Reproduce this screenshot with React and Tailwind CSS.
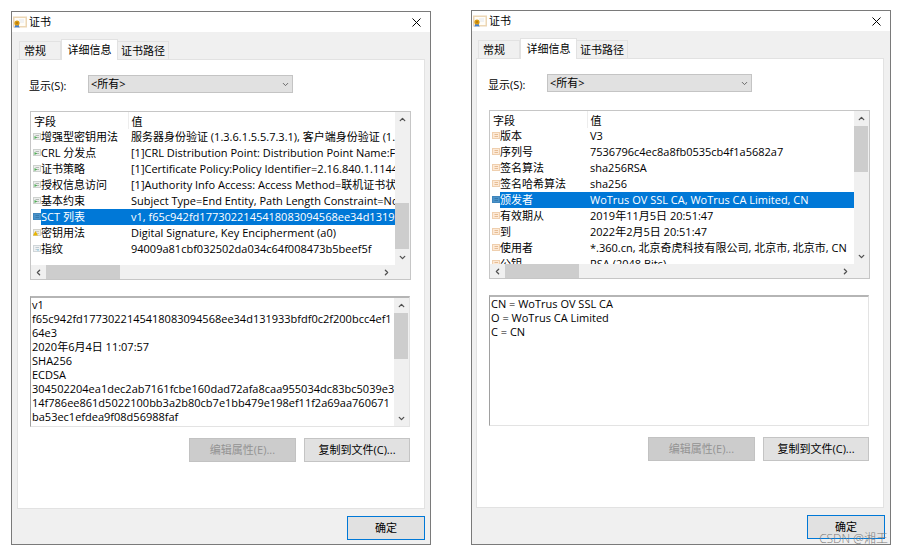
import { ChevronDown, ChevronLeft, ChevronRight, ChevronUp, X } from 'lucide-react';

const sctFields = [
  { name: '增强型密钥用法', value: '服务器身份验证 (1.3.6.1.5.5.7.3.1), 客户端身份验证 (1.3.6.1.5.5.7.3.2)', icon: 'ext' },
  { name: 'CRL 分发点', value: '[1]CRL Distribution Point: Distribution Point Name:Full Name', icon: 'ext' },
  { name: '证书策略', value: '[1]Certificate Policy:Policy Identifier=2.16.840.1.114412', icon: 'ext' },
  { name: '授权信息访问', value: '[1]Authority Info Access: Access Method=联机证书状态协议', icon: 'ext' },
  { name: '基本约束', value: 'Subject Type=End Entity, Path Length Constraint=None', icon: 'ext' },
  { name: 'SCT 列表', value: 'v1, f65c942fd1773022145418083094568ee34d131933bfdf0c', icon: 'selected', selected: true },
  { name: '密钥用法', value: 'Digital Signature, Key Encipherment (a0)', icon: 'warn' },
  { name: '指纹', value: '94009a81cbf032502da034c64f008473b5beef5f', icon: 'prop' },
];

const issuerFields = [
  { name: '版本', value: 'V3', icon: 'v1' },
  { name: '序列号', value: '7536796c4ec8a8fb0535cb4f1a5682a7', icon: 'v1' },
  { name: '签名算法', value: 'sha256RSA', icon: 'v1' },
  { name: '签名哈希算法', value: 'sha256', icon: 'v1' },
  { name: '颁发者', value: 'WoTrus OV SSL CA, WoTrus CA Limited, CN', icon: 'selected', selected: true },
  { name: '有效期从', value: '2019年11月5日 20:51:47', icon: 'v1' },
  { name: '到', value: '2022年2月5日 20:51:47', icon: 'v1' },
  { name: '使用者', value: '*.360.cn, 北京奇虎科技有限公司, 北京市, 北京市, CN', icon: 'v1' },
  { name: '公钥', value: 'RSA (2048 Bits)', icon: 'v1' },
];

const sctDetail = `v1
f65c942fd1773022145418083094568ee34d131933bfdf0c2f200bcc4ef1
64e3
2020年6月4日 11:07:57
SHA256
ECDSA
304502204ea1dec2ab7161fcbe160dad72afa8caa955034dc83bc5039e3
14f786ee861d5022100bb3a2b80cb7e1bb479e198ef11f2a69aa760671
ba53ec1efdea9f08d56988faf`;

const issuerDetail = `CN = WoTrus OV SSL CA
O = WoTrus CA Limited
C = CN`;

function CertificateIcon() {
  return (
    <svg width="14" height="13" viewBox="0 0 14 13" className="shrink-0">
      <rect x="0.75" y="1.25" width="12.5" height="9.5" fill="#fffdf8" stroke="#ecd6b4" strokeWidth="1.5" />
      <path d="M6 4h5M7 6h4" stroke="#e3e6ec" />
      <path d="M2.5 8 1.5 12l1.8-1 .7 1 .7-1 1.8 1-1-4z" fill="#3f7fd6" />
      <circle cx="4" cy="7" r="2.6" fill="#d99a12" />
      <circle cx="4" cy="7" r="1.1" fill="#b87a08" />
    </svg>
  );
}

const iconColors = {
  ext: { bg: '#eceeec', edge: '#cdd1ce', ink: '#b4bab6' },
  warn: { bg: '#ecece8', edge: '#d3d3cd', ink: '#c9c9c4' },
  prop: { bg: '#eef1f3', edge: '#d0d6d9', ink: '#c0cbd1' },
  v1: { bg: '#fde9d6', edge: '#efcfae', ink: '#e6bd94' },
  selected: { bg: '#4a93c9', edge: '#3f86bd', ink: '#3679ad' },
};

function FieldIcon({ type }) {
  const { bg, edge, ink } = iconColors[type];
  return (
    <svg width="8" height="8" viewBox="0 0 8 8" className="shrink-0">
      <rect x="0.5" y="0.5" width="7" height="6" fill={bg} stroke={edge} />
      <path d="M2.5 2.5H6M2.5 4.5H6" stroke={ink} />
      {type === 'ext' && <path d="M1.5 3 4.3 4.5 1.5 6z" fill="#4fae55" />}
      {type === 'warn' && <path d="M2.5 2 5 6.5H0z" fill="#e8b400" />}
      {type === 'prop' && <path d="M4 5h2" stroke="#8ccbe6" />}
    </svg>
  );
}

function ScrollButton({ icon: Icon, label }) {
  return (
    <button type="button" aria-label={label} className="flex size-[15px] shrink-0 items-center justify-center text-[#505050]">
      <Icon size={9} strokeWidth={3.5} />
    </button>
  );
}

function VerticalScrollbar({ thumb }) {
  return (
    <div className="flex w-[15px] shrink-0 flex-col bg-[#f0f0f0]">
      <ScrollButton icon={ChevronUp} label="向上滚动" />
      <div className="flex-1">
        <div className={`w-[14px] bg-[#cdcdcd] ${thumb}`} />
      </div>
      <ScrollButton icon={ChevronDown} label="向下滚动" />
    </div>
  );
}

function FieldList({ fields, thumb }) {
  return (
    <div className="border border-[#c6c6c6] bg-white">
      <div className="flex h-[153px]">
        <div className="min-w-0 flex-1 overflow-hidden">
          <table className="w-full table-fixed border-collapse text-left leading-4">
            <thead>
              <tr className="h-[17px] leading-[15px]">
                <th className="w-[97px] border-r border-[#ededed] p-0 pt-[2px] pl-[3px] font-normal">字段</th>
                <th className="p-0 pt-[2px] pl-[3px] font-normal">值</th>
              </tr>
            </thead>
            <tbody>
              {fields.map((field) => (
                <tr key={field.name} className="h-4">
                  <td className="p-0">
                    <div className="flex items-center pl-[2px]">
                      <FieldIcon type={field.icon} />
                      <span className={`h-4 flex-1 whitespace-nowrap ${field.selected ? 'bg-[#0078d7] text-white' : ''}`}>
                        {field.name}
                      </span>
                    </div>
                  </td>
                  <td className={`overflow-hidden p-0 pl-[3px] whitespace-nowrap ${field.selected ? 'bg-[#0078d7] text-white' : ''}`}>
                    {field.value}
                  </td>
                </tr>
              ))}
            </tbody>
          </table>
        </div>
        <VerticalScrollbar thumb={thumb} />
      </div>
      <div className="flex h-[14px] items-center bg-[#f0f0f0] pr-[16px]">
        <ScrollButton icon={ChevronLeft} label="向左滚动" />
        <div className="h-full flex-1">
          <div className="h-full w-[74px] bg-[#cdcdcd]" />
        </div>
        <ScrollButton icon={ChevronRight} label="向右滚动" />
      </div>
    </div>
  );
}

function CertificateDialog({ id, fields, detail, listThumb, detailThumb, className, inset }) {
  return (
    <section className={`min-w-0 border border-[#7a7a7a] bg-[#f0f0f0] ${className}`}>
      <header className="flex h-5 items-center bg-white pr-[6px] pl-px">
        <CertificateIcon />
        <h1 className="ml-[2px] flex-1">证书</h1>
        <button type="button" aria-label="关闭" className="text-black">
          <X size={15} strokeWidth={1.6} />
        </button>
      </header>

      <div className={`pt-[7px] ${inset}`}>
        <div role="tablist" className="flex items-end pl-[2px]">
          <button type="button" role="tab" className="h-[19px] w-[42px] border border-b-0 border-[#e2e2e2] pr-[10px]">常规</button>
          <button type="button" role="tab" aria-selected="true" className="relative h-[21px] w-[57px] border border-b-0 border-[#e2e2e2] bg-white">
            详细信息
          </button>
          <button type="button" role="tab" className="h-[19px] w-[51px] border border-b-0 border-l-0 border-[#e2e2e2]">证书路径</button>
        </div>

        <div className="-mt-px border border-[#e2e2e2] bg-white pt-[15px] pr-[13px] pb-[46px] pl-[11px]">
          <div className="flex h-[18px]">
            <label htmlFor={`${id}-show`} className="w-[59px] pt-[3px] leading-4">显示(S):</label>
            <div className="relative">
              <select id={`${id}-show`} className="block h-[18px] w-[205px] appearance-none border border-[#c4c4c4] bg-[#e1e1e1] pl-[2px] leading-4">
                <option>&lt;所有&gt;</option>
              </select>
              <ChevronDown size={9} strokeWidth={2.5} className="pointer-events-none absolute top-[5px] right-[3px] text-[#606060]" />
            </div>
          </div>

          <div className="mt-[18px] ml-px">
            <FieldList fields={fields} thumb={listThumb} />
          </div>

          <div className="mx-px mt-4 flex h-[131px] border border-t-2 border-[#e3e3e3] border-t-[#b5b5b5] border-l-[#a0a0a0]">
            <textarea
              readOnly
              aria-label="字段详细信息"
              value={detail}
              className="min-w-0 flex-1 resize-none overflow-hidden pl-px leading-[14px] whitespace-pre outline-none"
            />
            {detailThumb && <VerticalScrollbar thumb={detailThumb} />}
          </div>

          <div className="mt-[11px] mr-px flex justify-end gap-[8px]">
            <button type="button" disabled className="h-6 w-[107px] border border-[#c2c2c2] bg-[#cccccc] text-[#939393]">
              编辑属性(E)...
            </button>
            <button type="button" className="h-6 w-[106px] border border-[#c4c4c4] bg-[#e1e1e1]">
              复制到文件(C)...
            </button>
          </div>
        </div>
      </div>

      <footer className="flex justify-end pt-[7px] pr-[5px] pb-[4px]">
        <button type="button" className="h-6 w-[78px] border border-[#0078d7] bg-[#e1e1e1]">确定</button>
      </footer>
    </section>
  );
}

export default function App() {
  return (
    <main className="relative grid min-h-screen grid-cols-2 items-start gap-10 bg-white pt-[10px] pr-[12px] pl-[11px] font-['Open_Sans','Noto_Sans_CJK_SC',sans-serif] text-[11px] text-black">
      <CertificateDialog
        id="sct"
        fields={sctFields}
        detail={sctDetail}
        listThumb="mt-[76px] h-[46px]"
        detailThumb="h-[46px]"
        className="mt-px"
        inset="px-[5px]"
      />
      <CertificateDialog
        id="issuer"
        fields={issuerFields}
        detail={issuerDetail}
        listThumb="h-[46px]"
        className="pb-px"
        inset="pr-[6px] pl-[4px]"
      />
      <div className="pointer-events-none absolute right-[15px] bottom-[6px] text-[12px] leading-4 font-light text-[#7d7d7d]">CSDN @湘王</div>
    </main>
  );
}
